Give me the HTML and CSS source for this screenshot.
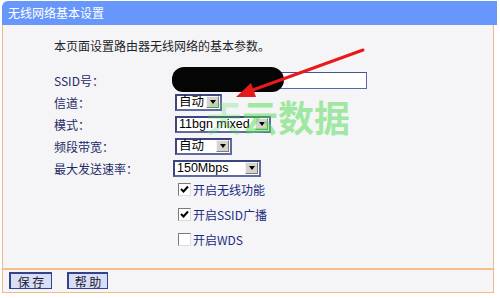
FILE: index.html
```html
<!DOCTYPE html>
<html lang="zh-CN">
<head>
<meta charset="utf-8">
<title>无线网络基本设置</title>
<link rel="stylesheet" href="styles.css">
</head>
<body>
<div class="page">
  <div class="frame">
    <div class="header">无线网络基本设置</div>
    <div class="content">
      <p class="desc">本页面设置路由器无线网络的基本参数。</p>
      <div class="form">
        <div class="row">
          <span class="label">SSID号：</span>
          <span class="input"></span>
        </div>
        <div class="row">
          <span class="label">信道：</span>
          <span class="select w-channel"><span class="val">自动</span><span class="btn"></span></span>
        </div>
        <div class="row">
          <span class="label">模式：</span>
          <span class="select w-mode"><span class="val">11bgn mixed</span><span class="btn"></span></span>
        </div>
        <div class="row">
          <span class="label">频段带宽：</span>
          <span class="select w-band"><span class="val">自动</span><span class="btn"></span></span>
        </div>
        <div class="row">
          <span class="label">最大发送速率：</span>
          <span class="select w-rate"><span class="val">150Mbps</span><span class="btn"></span></span>
        </div>
      </div>
      <div class="checks">
        <div class="check"><span class="box on"><svg viewBox="0 0 11 11" width="11" height="11"><path d="M2 5 L4.5 7.5 L9 2.5" fill="none" stroke="#000" stroke-width="2"/></svg></span><span class="ctext">开启无线功能</span></div>
        <div class="check"><span class="box on"><svg viewBox="0 0 11 11" width="11" height="11"><path d="M2 5 L4.5 7.5 L9 2.5" fill="none" stroke="#000" stroke-width="2"/></svg></span><span class="ctext">开启SSID广播</span></div>
        <div class="check"><span class="box"></span><span class="ctext">开启WDS</span></div>
      </div>
    </div>
    <div class="footer">
      <span class="button">保 存</span>
      <span class="button">帮 助</span>
    </div>
  </div>

  <div class="blob"></div>
  <div class="watermark"><span class="wm-first">天</span>云数据</div>
  <svg class="arrow" width="500" height="298" viewBox="0 0 500 298">
    <line x1="363" y1="50" x2="250" y2="91" stroke="#e8191c" stroke-width="3" stroke-linecap="round"/>
    <polygon points="236,97 256,97 251,83" fill="#e8191c"/>
  </svg>
</div>
</body>
</html>
```
FILE: styles.css
```css
html, body {
  margin: 0;
  padding: 0;
  background: #ffffff;
}
body {
  font-family: "Noto Sans CJK SC", "DejaVu Sans", sans-serif;
  font-size: 12px;
}
.page {
  position: relative;
  width: 500px;
  height: 298px;
  overflow: hidden;
}
.frame {
  margin: 1px 0 0 2px;
  width: 492px;
  display: flex;
  flex-direction: column;
}
.header {
  height: 24px;
  line-height: 24px;
  background: #6797fb;
  color: #ffffff;
  border-top-left-radius: 6px;
  padding-left: 6px;
  font-size: 12px;
  width: 495px;
  box-sizing: border-box;
}
.content {
  height: 243px;
  box-sizing: border-box;
  background: #f5f5f8;
  border-left: 1px solid #f4b883;
  border-right: 1px solid #f4b883;
  padding: 13px 0 0 51px;
}
.desc {
  margin: 0;
  height: 16px;
  line-height: 16px;
  color: #1f1f2a;
}
.form {
  margin-top: 15px;
  display: flex;
  flex-direction: column;
}
.row {
  height: 22px;
  display: flex;
  align-items: center;
}
.label {
  width: 121px;
  color: #1d2a66;
}
.input {
  width: 192px;
  height: 17px;
  box-sizing: border-box;
  background: #ffffff;
  border: 1px solid #5a68a8;
  border-top-color: #47538e;
}
.select {
  height: 17px;
  box-sizing: border-box;
  background: #ffffff;
  border: 2px solid #3b4680;
  border-right-color: #5d6aa4;
  border-bottom-color: #5d6aa4;
  display: flex;
  align-items: center;
  justify-content: space-between;
  font-family: "Liberation Sans", Arial, "Noto Sans CJK SC", sans-serif;
  font-size: 12.5px;
  color: #000;
}
.select .val {
  padding-left: 2px;
  line-height: 13px;
}
.select .btn {
  width: 13px;
  height: 12px;
  margin-right: 1px;
  box-sizing: border-box;
  background: #d6d3cc;
  border: 1px solid #f4f4f4;
  border-right-color: #7c7c7c;
  border-bottom-color: #7c7c7c;
  display: flex;
  align-items: center;
  justify-content: center;
}
.select .btn::after {
  content: "";
  border-left: 3px solid transparent;
  border-right: 3px solid transparent;
  border-top: 4px solid #000;
}
.w-channel { width: 47px; }
.w-mode { width: 96px; }
.w-band { width: 57px; }
.w-rate { width: 88px; margin-left: -2px; }
.checks {
  margin-top: -2px;
  padding-left: 124px;
  display: flex;
  flex-direction: column;
}
.check {
  height: 25px;
  display: flex;
  align-items: center;
  color: #1b2b82;
}
.box {
  width: 13px;
  height: 13px;
  box-sizing: border-box;
  background: #ffffff;
  border: 1px solid #7a7a7a;
  border-right-color: #dcdcdc;
  border-bottom-color: #dcdcdc;
  display: flex;
  align-items: center;
  justify-content: center;
  margin-right: 2px;
}
.ctext {
  line-height: 14px;
}
.footer {
  height: 25px;
  box-sizing: border-box;
  background: #f5f5f8;
  border-top: 2px solid #f7bd88;
  border-left: 1px solid #f4b883;
  border-right: 1px solid #f4b883;
  border-bottom: 1px solid #f4b883;
  padding: 2px 0 0 6px;
  display: flex;
  align-items: flex-start;
  gap: 15px;
}
.button {
  width: 43px;
  height: 17px;
  box-sizing: border-box;
  background: #d8def6;
  border: 1px solid #34428a;
  border-top-width: 2px;
  border-left-width: 2px;
  color: #1a1a30;
  display: flex;
  align-items: center;
  justify-content: center;
  line-height: 13px;
}
.button + .button { width: 41px; }
.blob {
  position: absolute;
  left: 172px;
  top: 67px;
  width: 112px;
  height: 25px;
  background: #050505;
  border-radius: 12px 13px 12px 11px;
  filter: blur(0.6px);
}
.watermark {
  position: absolute;
  left: 206px;
  top: 92px;
  font-size: 36px;
  font-weight: 700;
  line-height: 48px;
  color: rgba(86, 222, 86, 0.55);
  white-space: nowrap;
  pointer-events: none;
}
.wm-first {
  color: rgba(86, 222, 86, 0.3);
}
.arrow {
  position: absolute;
  left: 0;
  top: 0;
  pointer-events: none;
}
```
